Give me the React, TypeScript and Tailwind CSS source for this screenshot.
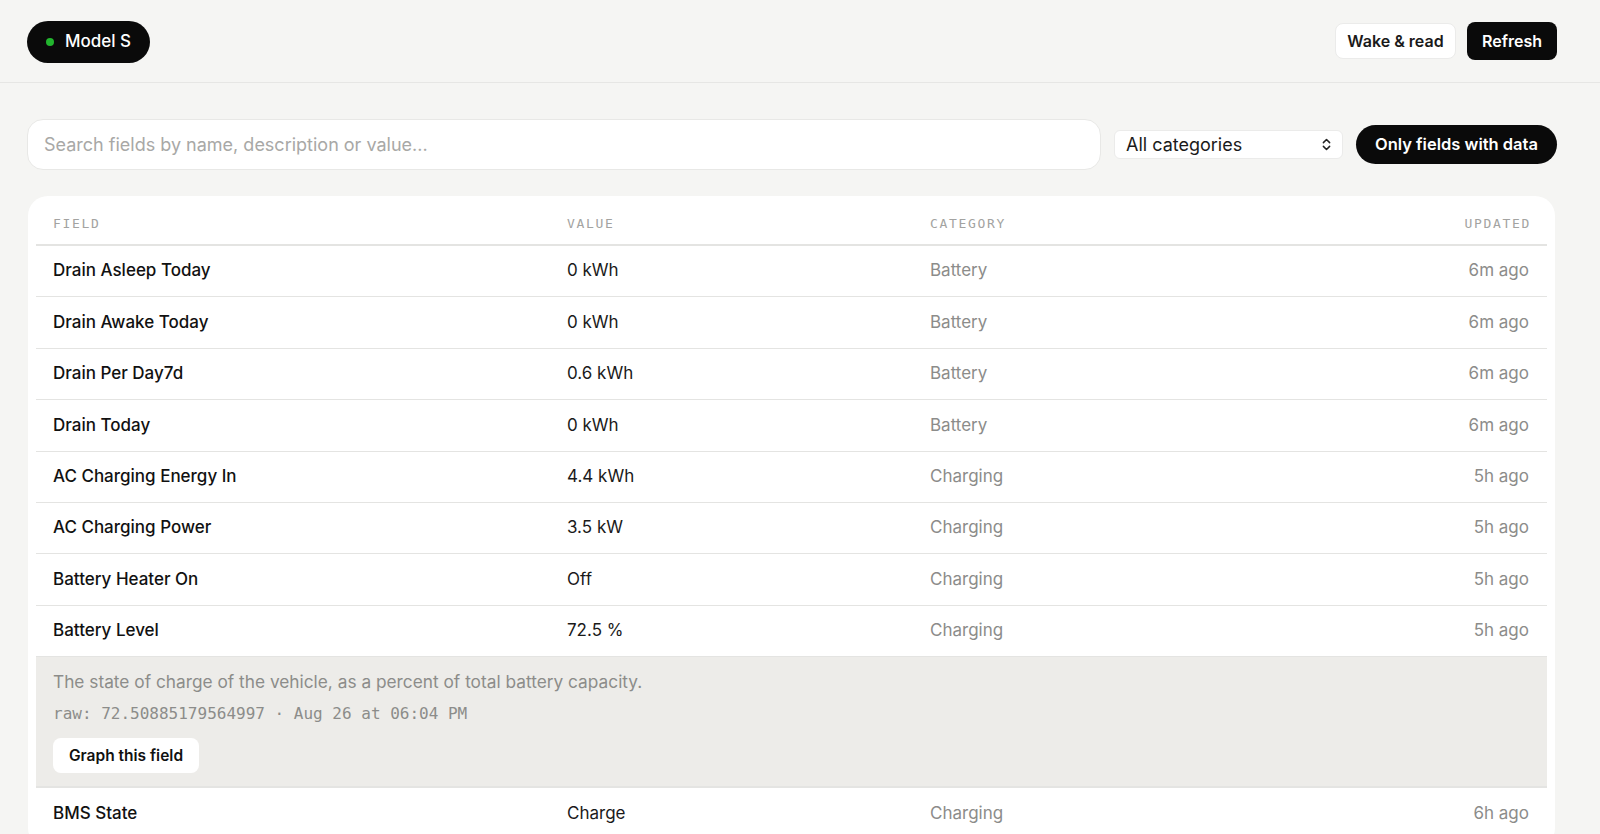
import { ChevronsUpDown } from 'lucide-react';

type Row = {
  field: string;
  value: string;
  category: string;
  updated: string;
};

const rows: Row[] = [
  { field: 'Drain Asleep Today', value: '0 kWh', category: 'Battery', updated: '6m ago' },
  { field: 'Drain Awake Today', value: '0 kWh', category: 'Battery', updated: '6m ago' },
  { field: 'Drain Per Day7d', value: '0.6 kWh', category: 'Battery', updated: '6m ago' },
  { field: 'Drain Today', value: '0 kWh', category: 'Battery', updated: '6m ago' },
  { field: 'AC Charging Energy In', value: '4.4 kWh', category: 'Charging', updated: '5h ago' },
  { field: 'AC Charging Power', value: '3.5 kW', category: 'Charging', updated: '5h ago' },
  { field: 'Battery Heater On', value: 'Off', category: 'Charging', updated: '5h ago' },
  { field: 'Battery Level', value: '72.5 %', category: 'Charging', updated: '5h ago' },
];

const after: Row[] = [
  { field: 'BMS State', value: 'Charge', category: 'Charging', updated: '6h ago' },
];

const gridCols = 'grid grid-cols-[514px_363px_1fr_auto]';
const mono = { fontFamily: '"DejaVu Sans Mono", "Liberation Mono", monospace' };

function TableRow({ row }: { row: Row }) {
  return (
    <div className={`${gridCols} h-[51.4px] items-center border-b border-[#e4e4e2] text-[17px]`}>
      <div className="pl-[17px] font-medium text-[#111]">{row.field}</div>
      <div className="pl-[17px] text-[#1a1a1a]">{row.value}</div>
      <div className="pl-[17px] text-[#8c8c8a]">{row.category}</div>
      <div className="pr-[18px] text-right text-[#8c8c8a]">{row.updated}</div>
    </div>
  );
}

export default function App() {
  return (
    <div
      className="min-h-screen bg-[#f5f5f3] text-[#111]"
      style={{ fontFamily: 'Inter, "Noto Sans", sans-serif' }}
    >
      {/* 헤더 */}
      <header className="flex h-[83px] items-center justify-between border-b border-[#e6e6e4] pl-[27px] pr-[43px]">
        <div className="mt-px flex h-[42px] w-[123px] items-center gap-[11px] rounded-full bg-[#0a0a0a] pl-[19px]">
          <span className="h-[8px] w-[8px] rounded-full bg-[#22b52e]" />
          <span className="pt-px text-[17px] font-medium text-white">Model S</span>
        </div>
        <div className="flex items-center gap-[11px]">
          <button className="h-[36px] w-[121px] rounded-lg border border-[#ebebea] bg-white text-[16px] font-semibold text-[#1a1a1a]">
            Wake &amp; read
          </button>
          <button className="h-[38px] w-[90px] rounded-lg bg-[#0a0a0a] text-[16px] font-semibold text-white">
            Refresh
          </button>
        </div>
      </header>

      <main className="px-[27px] pt-[36px]">
        {/* 검색 / 필터 */}
        <div className="flex items-center gap-[13px] pr-[16px]">
          <div className="flex h-[51px] flex-1 items-center rounded-2xl border border-[#e8e8e6] bg-white px-[16px]">
            <input
              className="w-full bg-transparent text-[18px] outline-none placeholder:text-[#a8a8a6]"
              placeholder="Search fields by name, description or value..."
            />
          </div>
          <div className="flex h-[29px] w-[229px] items-center justify-between rounded-md border border-[#ebebea] bg-white pl-[11px] pr-[8px]">
            <span className="text-[18px] text-[#1a1a1a]">All categories</span>
            <ChevronsUpDown size={15} strokeWidth={2.4} className="text-[#222]" />
          </div>
          <button className="h-[39px] w-[201px] rounded-full bg-[#0a0a0a] text-[16.5px] font-semibold text-white">
            Only fields with data
          </button>
        </div>

        {/* 테이블 */}
        <div className="mt-[26px] mr-[18px] ml-px rounded-[20px] bg-white p-2">
          <div
            className={`${gridCols} h-[42px] items-center border-b-2 border-[#e4e4e2] text-[13px] tracking-[0.13em] text-[#a3a3a1]`}
            style={mono}
          >
            <div className="pl-[17px]">FIELD</div>
            <div className="pl-[17px]">VALUE</div>
            <div className="pl-[17px]">CATEGORY</div>
            <div className="pr-[16px] text-right">UPDATED</div>
          </div>

          {rows.map((row) => (
            <TableRow key={row.field} row={row} />
          ))}

          {/* 상세 정보 */}
          <div className="border-b-2 border-[#e4e4e2] bg-[#edece9] px-[17px] pt-[13px] pb-[13px]">
            <p className="text-[17.3px] leading-6 text-[#8c8c8a]">
              The state of charge of the vehicle, as a percent of total battery capacity.
            </p>
            <p className="mt-[10px] text-[16px] leading-5 text-[#8c8c8a]" style={mono}>
              raw: 72.50885179564997 · Aug 26 at 06:04 PM
            </p>
            <button className="mt-[14px] h-[35px] w-[146px] rounded-lg bg-white text-[15.5px] font-semibold text-[#111]">
              Graph this field
            </button>
          </div>

          {after.map((row) => (
            <TableRow key={row.field} row={row} />
          ))}
        </div>
      </main>
    </div>
  );
}
